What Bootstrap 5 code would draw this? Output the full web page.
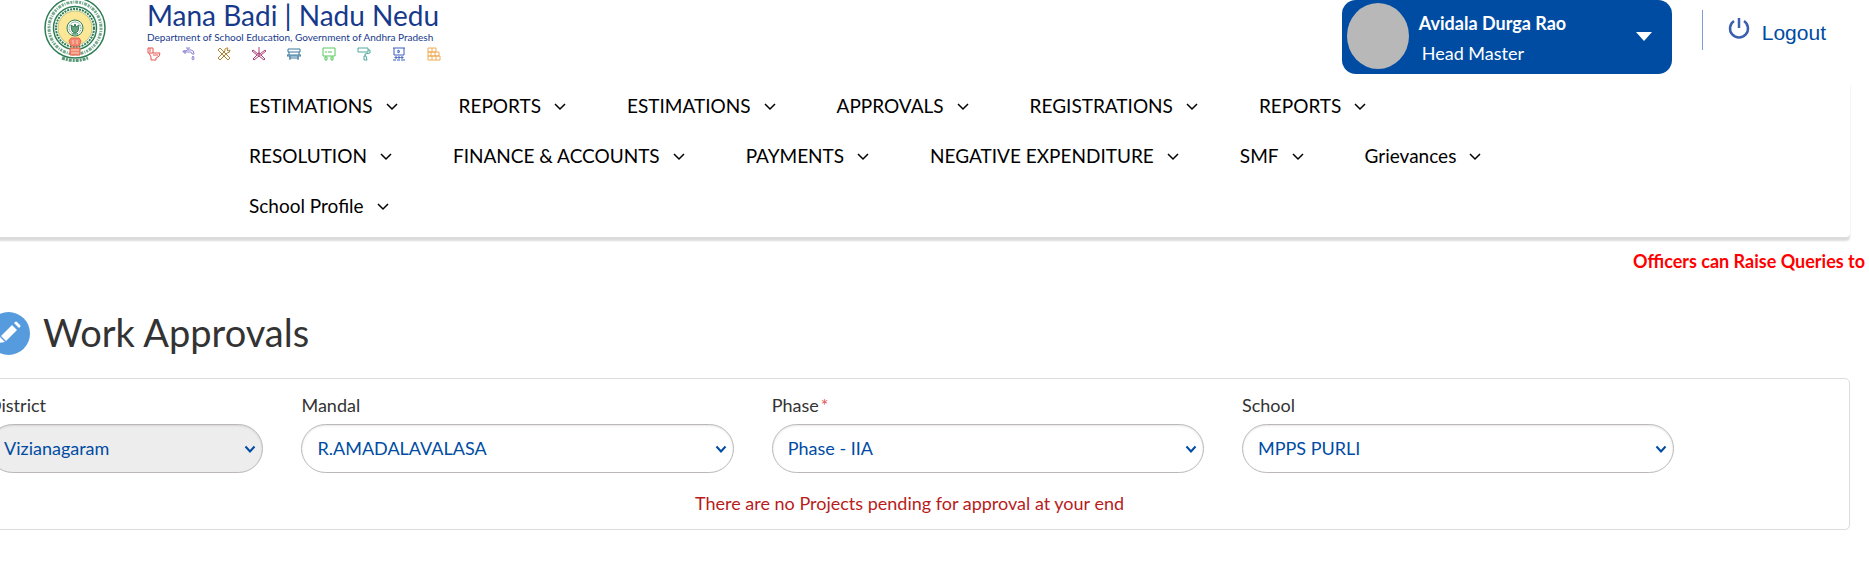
<!DOCTYPE html>
<html lang="en">
<head>
<meta charset="utf-8">
<meta name="viewport" content="width=device-width, initial-scale=1">
<title>Work Approvals</title>
<link href="https://cdn.jsdelivr.net/npm/bootstrap@5.3.0/dist/css/bootstrap.min.css" rel="stylesheet">
<style>
  :root { --brand: #004ca3; }
  body { font-family: Lato, "Liberation Sans", sans-serif; font-size: 18px; line-height: 24px; color: #333; background: #fff; overflow-x: hidden; }
  .topbar { height: 80px; padding: 0 43px; }
  .seal { width: 64px; height: 64px; }
  .brand-link { gap: 40px; }
  .site-name { font-size: 28px; line-height: 31px; color: #17398b; }
  .site-dept { font-size: 10px; line-height: 12px; color: #17398b; }
  .works { gap: 21px; margin-top: 4px; }
  .works svg { width: 14px; height: 14px; fill: none; stroke-width: 1; }
  .user-box { width: 330px; height: 74px; padding: 2px 20px 4px 5px; border: 0; border-radius: 14px; background: var(--brand); color: #fff; line-height: 30px; }
  .user-text { padding: 4px 0 0 10px; }
  .user-role { padding-left: 3px; }
  .avatar { width: 62px; height: 66px; background: #b8b8b8; }
  .divider { width: 1px; height: 40px; margin: 10px 25px 0 30px; background: #7f9fd2; }
  .logout { gap: 12px; margin-top: 17px; font: 21px/32px "Liberation Sans", Arial, sans-serif; color: var(--brand); }
  .menu-panel { margin: 0 19px 0 -31px; padding: 1px 300px 6px 280px; border-radius: 4px; box-shadow: 0 4px 2px rgba(0,0,0,.14); }
  .menu-panel .nav { column-gap: 61px; }
  .menu-panel .nav-link { padding: 0; font-size: 19px; line-height: 50px; color: #000; display: flex; align-items: center; gap: 13px; }
  .notice { font-weight: 700; color: #f00; margin-top: 12px; padding-right: 4px; }
  .content { margin: 35px 19px 0 -31px; }
  .title-bar { gap: 13px; padding-left: 18px; }
  .title-icon { width: 43px; height: 43px; background: #579bdf; }
  h1 { font-size: 38px; line-height: 48px; padding-bottom: 2px; font-weight: 400; }
  .panel { margin-top: 20px; border: 1px solid #ddd; border-radius: 5px; padding: 14px 18px; box-shadow: 0 1px 1px rgba(0,0,0,.05); }
  .panel .row { --bs-gutter-x: 38px; }
  .form-label { margin-bottom: 7px; }
  .required { font-size: 18px; line-height: 18px; margin-left: 2px; color: #e0584f; }
  .form-select { height: 49px; padding: 0 36px 0 15px; border: 1px solid #bcb8ba; border-radius: 25px; font-size: 18px; color: var(--brand);
    box-shadow: inset 0 1px 2px rgba(0,0,0,.1); background-position: right 5px center; background-size: 14px 14px;
    background-image: url("data:image/svg+xml,%3Csvg xmlns='http://www.w3.org/2000/svg' viewBox='0 0 14 14'%3E%3Cpath d='M2.5 4.5L7 9.5L11.500 4.500' fill='none' stroke='%23004ca3' stroke-width='2'/%3E%3C/svg%3E"); }
  .form-select:disabled { color: var(--brand); background-color: #ededed; opacity: 1; }
  .empty { color: #b71c1c; margin-top: 18px; }
</style>
</head>
<body>
<header class="topbar d-flex align-items-start">
  <a href="#" class="brand-link d-flex text-decoration-none" aria-label="Mana Badi Nadu Nedu home">
    <svg class="seal" viewBox="0 0 64 64" fill="none" stroke="#2f7d54" aria-hidden="true">
      <circle cx="32" cy="28" r="30" fill="#fff" stroke-width="1.500"/>
      <circle cx="32" cy="28" r="26" stroke-width="3" stroke-dasharray="2 1 1 1 3 1" opacity=".65"/>
      <circle cx="32" cy="28" r="21.500" stroke-width="1.500"/>
      <circle cx="32" cy="28" r="19" stroke-width="2" stroke-dasharray="2 1"/>
      <circle cx="32" cy="28" r="17" fill="#fbe795" stroke="#b9c57d"/>
      <circle cx="32" cy="28" r="8" fill="#fff"/>
      <circle cx="32" cy="28" r="6" stroke-dasharray="1 1"/>
      <path d="M28 25l3 2 1-3 1 3 3-2-1 6q-3 4-6 0zM29 34h6" fill="#66a37f"/>
      <path d="M28 38h8l2 3-2 5h-8l-2-5zM27 48h10v7H27z" fill="#f3876f" stroke="#e7684f"/>
      <path d="M30 40v4m4-4v4m-6 6h8m-8 3h8" stroke="#fbd0c4"/>
      <path d="M19 58q13 5 26 0" stroke-width="3" stroke-dasharray="3 1 2 1" opacity=".8"/>
    </svg>
    <span class="d-block">
      <span class="site-name d-block text-nowrap">Mana Badi | Nadu Nedu</span>
      <span class="site-dept d-block text-nowrap">Department of School Education, Government of Andhra Pradesh</span>
      <span class="works d-flex">
        <svg viewBox="0 0 14 14" stroke="#e85650"><path d="M1 1h5v5H1zM3 1v4M6 6h7q0 4-4 5v2H4v-3L2 6M6 8h5"/></svg>
        <svg viewBox="0 0 14 14" stroke="#8b83d2"><path d="M1 4h3l1-1h4q3 0 3 4h-2q0-2-2-2H1zM4 1h4M6 1v2M3 3v4M11 9l1 2q0 2-1 2t-1-2z"/></svg>
        <svg viewBox="0 0 14 14" stroke="#ad8434"><path d="M1 3l2-2 10 10-2 2zM13 3l-2 1-1-1 1-2q-4 0-3 3L1 11l2 2 7-7q3 0 3-3z"/></svg>
        <svg viewBox="0 0 14 14" stroke="#ad417b"><path d="M7 0v6M6 7L1 3 0 4l5 4-4 4 1 1 5-4 5 4 1-1-4-4 5-4-1-1-5 4zM6 6h2v3H6z"/></svg>
        <svg viewBox="0 0 14 14" stroke="#39769f"><path d="M1 2h12v3H1zM2 5v3M12 5v3M0 8h14v1H0zM3 9v4M11 9v4M2 11h10"/></svg>
        <svg viewBox="0 0 14 14" stroke="#59c85d"><path d="M1 1h12v8H1zM4 4v2M9 4v2M6 5h2M3 10h2v3H3zM9 10h2v3H9z"/></svg>
        <svg viewBox="0 0 14 14" stroke="#4fa89d"><path d="M1 1h10v4H1zM11 3h2v3L8 7v2M7 9h2l1 4H7z"/></svg>
        <svg viewBox="0 0 14 14" stroke="#385ec0"><path d="M1 1h12M2 1v7h10V1M6 3v3l2-1.500zM3 10h2v1H3zM6 10h2v1H6zM9 10h2v1H9zM1 13h3M5 13h3M9 13h4"/></svg>
        <svg viewBox="0 0 14 14" stroke="#f0ab55"><path d="M1 1h8v4H1zM1 5h11v4H1zM1 9h12v4H1zM5 1v4M4 5v4M8 5v4M5 9v4M9 9v4"/></svg>
      </span>
    </span>
  </a>
  <button type="button" class="user-box ms-auto d-flex align-items-center text-start">
    <span class="avatar rounded-circle flex-shrink-0"></span>
    <span class="user-text flex-grow-1"><strong class="d-block">Avidala Durga Rao</strong><span class="user-role d-block">Head Master</span></span>
    <svg width="16" height="9" viewBox="0 0 16 9" aria-hidden="true"><path d="M0 0h16L8 9z" fill="#fff"/></svg>
  </button>
  <span class="divider"></span>
  <a href="#" class="logout d-flex text-decoration-none">
    <svg width="22" height="24" viewBox="0 0 22 24" fill="none" stroke="#3c5fae" stroke-width="2.500" aria-hidden="true"><path d="M6 4a9 9 0 1 0 10 0M11 1v10"/></svg>
    <span>Logout</span>
  </a>
</header>

<nav class="menu-panel" aria-label="Main">
  <ul class="nav" id="menu">
    <li><a class="nav-link" href="#">ESTIMATIONS</a></li>
    <li><a class="nav-link" href="#">REPORTS</a></li>
    <li><a class="nav-link" href="#">ESTIMATIONS</a></li>
    <li><a class="nav-link" href="#">APPROVALS</a></li>
    <li><a class="nav-link" href="#">REGISTRATIONS</a></li>
    <li><a class="nav-link" href="#">REPORTS</a></li>
    <li><a class="nav-link" href="#">RESOLUTION</a></li>
    <li><a class="nav-link" href="#">FINANCE &amp; ACCOUNTS</a></li>
    <li><a class="nav-link" href="#">PAYMENTS</a></li>
    <li><a class="nav-link" href="#">NEGATIVE EXPENDITURE</a></li>
    <li><a class="nav-link" href="#">SMF</a></li>
    <li><a class="nav-link" href="#">Grievances</a></li>
    <li><a class="nav-link" href="#">School Profile</a></li>
  </ul>
</nav>

<div class="notice text-end">Officers can Raise Queries to</div>

<main class="content">
  <div class="title-bar d-flex align-items-center">
    <span class="title-icon rounded-circle d-flex align-items-center justify-content-center flex-shrink-0">
      <svg width="24" height="24" viewBox="0 0 24 24" fill="#fff" aria-hidden="true"><path d="M2 22l1-6 5 5zM4 15L15 4l5 5L9 20zM17 2l1-1q1-1 2 0l3 3q1 1 0 2l-1 1z"/></svg>
    </span>
    <h1 class="mb-0">Work Approvals</h1>
  </div>
  <section class="panel">
    <form class="row">
      <div class="col-2"><label class="form-label" for="district">District</label>
        <select class="form-select" id="district" disabled><option>Vizianagaram</option></select></div>
      <div class="col-3"><label class="form-label" for="mandal">Mandal</label>
        <select class="form-select" id="mandal"><option>R.AMADALAVALASA</option></select></div>
      <div class="col-3"><label class="form-label" for="phase">Phase<span class="required">*</span></label>
        <select class="form-select" id="phase"><option>Phase - IIA</option></select></div>
      <div class="col-3"><label class="form-label" for="school">School</label>
        <select class="form-select" id="school"><option>MPPS PURLI</option></select></div>
    </form>
    <p class="empty text-center mb-0">There are no Projects pending for approval at your end</p>
  </section>
</main>
<script src="https://cdn.jsdelivr.net/npm/bootstrap@5.3.0/dist/js/bootstrap.bundle.min.js"></script>
<script>
  document.querySelectorAll('#menu .nav-link').forEach(function (link) {
    link.insertAdjacentHTML('beforeend', '<svg width="12" height="12" viewBox="0 0 12 12" fill="none" stroke="#000" stroke-width="1.500" aria-hidden="true"><path d="M1 4l5 5 5-5"/></svg>');
  });
</script>
</body>
</html>
